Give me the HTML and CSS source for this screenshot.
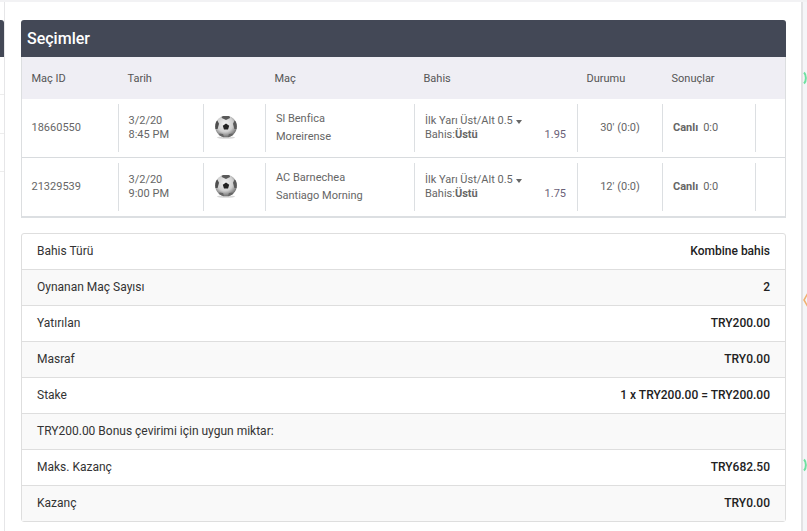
FILE: index.html
```html
<!DOCTYPE html>
<html lang="tr">
<head>
<meta charset="utf-8">
<title>Seçimler</title>
<link rel="stylesheet" href="styles.css">
</head>
<body>
<svg class="defs" width="0" height="0" aria-hidden="true">
  <defs>
    <radialGradient id="ballShade" cx="45%" cy="38%" r="62%">
      <stop offset="0" stop-color="#f4f4f4"/>
      <stop offset="0.6" stop-color="#cfcfcf"/>
      <stop offset="1" stop-color="#6e6e6e"/>
    </radialGradient>
    <clipPath id="ballClip"><circle cx="11" cy="10.5" r="10.8"/></clipPath>
    <symbol id="ball" viewBox="0 0 22 24">
      <ellipse cx="11" cy="21.6" rx="9" ry="1.1" fill="#d8d8d8"/>
      <circle cx="11" cy="10.5" r="10.8" fill="url(#ballShade)"/>
      <g clip-path="url(#ballClip)">
        <path d="M11 7.5l3.2 2.3-1.2 3.7H9l-1.2-3.7z" fill="#222"/>
        <path d="M6.5-.5h8l.5 2.4-4 2-4.2-2z" fill="#5a5a5a"/>
        <path d="M-1 6l3.4-1.6 1.6 3.4-1.4 5.2H-1z" fill="#4e4e4e"/>
        <path d="M23 6l-3.4-1.6-1.6 3.4 1.4 5.2H23z" fill="#5a5a5a"/>
        <path d="M4.5 17.5l3.6.6 1 3.9H3z" fill="#666"/>
        <path d="M17.5 17.5l-3.6.6-1 3.9H19z" fill="#666"/>
      </g>
    </symbol>
  </defs>
</svg>
<div class="top-strip"></div>
<div class="layout">
  <div class="main">
    <aside class="stub">
      <div class="stub-head"></div>
      <div class="stub-row"></div>
      <div class="stub-row"></div>
      <div class="stub-row"></div>
    </aside>
    <div class="content">
      <section class="selections">
        <h2 class="sel-title">Seçimler</h2>
        <div class="sel-table">
          <div class="grid sel-head">
            <div>Maç ID</div>
            <div>Tarih</div>
            <div></div>
            <div>Maç</div>
            <div>Bahis</div>
            <div>Durumu</div>
            <div>Sonuçlar</div>
            <div></div>
          </div>
          <div class="grid sel-row">
            <div class="cell cell-id">18660550</div>
            <div class="cell sep tight">3/2/20<br>8:45 PM</div>
            <div class="cell sep cell-icon"><svg class="ball" width="22" height="24"><use href="#ball"/></svg></div>
            <div class="cell sep teams"><div>Sl Benfica</div><div>Moreirense</div></div>
            <div class="cell sep bet">
              <div class="bet-market">İlk Yarı Üst/Alt 0.5<span class="caret"></span></div>
              <div class="bet-line"><span>Bahis:<b>Üstü</b></span><span class="odds">1.95</span></div>
            </div>
            <div class="cell sep status">30' (0:0)</div>
            <div class="cell sep result"><b>Canlı</b><span class="score">0:0</span></div>
            <div class="cell sep"></div>
          </div>
          <div class="grid sel-row">
            <div class="cell cell-id">21329539</div>
            <div class="cell sep tight">3/2/20<br>9:00 PM</div>
            <div class="cell sep cell-icon"><svg class="ball" width="22" height="24"><use href="#ball"/></svg></div>
            <div class="cell sep teams"><div>AC Barnechea</div><div>Santiago Morning</div></div>
            <div class="cell sep bet">
              <div class="bet-market">İlk Yarı Üst/Alt 0.5<span class="caret"></span></div>
              <div class="bet-line"><span>Bahis:<b>Üstü</b></span><span class="odds">1.75</span></div>
            </div>
            <div class="cell sep status">12' (0:0)</div>
            <div class="cell sep result"><b>Canlı</b><span class="score">0:0</span></div>
            <div class="cell sep"></div>
          </div>
        </div>
      </section>
      <section class="summary">
        <div class="sum-row"><span>Bahis Türü</span><b>Kombine bahis</b></div>
        <div class="sum-row"><span>Oynanan Maç Sayısı</span><b>2</b></div>
        <div class="sum-row"><span>Yatırılan</span><b>TRY200.00</b></div>
        <div class="sum-row"><span>Masraf</span><b>TRY0.00</b></div>
        <div class="sum-row"><span>Stake</span><b>1 x TRY200.00 = TRY200.00</b></div>
        <div class="sum-row"><span>TRY200.00 Bonus çevirimi için uygun miktar:</span></div>
        <div class="sum-row"><span>Maks. Kazanç</span><b>TRY682.50</b></div>
        <div class="sum-row"><span>Kazanç</span><b>TRY0.00</b></div>
      </section>
    </div>
  </div>
  <aside class="rail">
    <svg class="mark mark-a" width="5" height="14" viewBox="0 0 5 14"><path d="M1 1.5C3.5 4 3.5 10 1 12.5" fill="none" stroke="#6fe0a0" stroke-width="2"/></svg>
    <svg class="mark mark-b" width="5" height="18" viewBox="0 0 5 18"><path d="M5 1L1 8l4 7" fill="none" stroke="#f0b070" stroke-width="1.6"/></svg>
    <svg class="mark mark-c" width="5" height="14" viewBox="0 0 5 14"><path d="M1 1.5C3.5 4 3.5 10 1 12.5" fill="none" stroke="#6fe0a0" stroke-width="2"/></svg>
  </aside>
</div>
</body>
</html>
```
FILE: styles.css
```css
* { box-sizing: border-box; }
html, body { margin: 0; height: 100%; }
body {
  width: 807px;
  height: 531px;
  overflow: hidden;
  background: #f5f5f8;
  font-family: Roboto, "Liberation Sans", sans-serif;
  font-size: 11px;
  color: #666;
  display: flex;
  flex-direction: column;
}
.defs { position: absolute; }
.top-strip { height: 2px; flex: none; background: #f2f2f4; }
.layout { flex: 1; display: flex; min-height: 0; }
.main {
  width: 803px;
  flex: none;
  display: flex;
  background: #fff;
  border-right: 2px solid #e2e2e4;
}
.stub { width: 5px; flex: none; padding-top: 18px; border-right: 1px solid #e6e6e8; }
.stub-head { height: 37px; background: #434856; border-top-right-radius: 3px; }
.stub-row { height: 38.3px; border-bottom: 1px solid #ededed; }
.content { margin-left: 16px; width: 765px; padding-top: 18px; }
.selections { border-radius: 3px 3px 0 0; }
.sel-title {
  margin: 0;
  height: 37px;
  padding: 0 6px;
  background: #434856;
  color: #fff;
  font-size: 16px;
  font-weight: 500;
  line-height: 37px;
  border-radius: 3px 3px 0 0;
}
.sel-table {
  border: 1px solid #dcdee0;
  border-top: 0;
  border-bottom: 2px solid #dcdfe2;
}
.grid { display: grid; grid-template-columns: 96px 85px 62px 149px 163px 85px 93px 1fr; }
.sel-head { height: 42px; padding-top: 2px; background: #efeef4; align-items: center; color: #555; line-height: 14px; }
.sel-head > div { padding-left: 9.5px; }
.sel-row { height: 59px; padding: 5px 0; border-bottom: 1px solid #d8dbde; }
.sel-row:last-child { border-bottom: 0; height: 58px; }
.cell { display: flex; flex-direction: column; justify-content: center; padding: 0 10px; line-height: 14px; min-width: 0; }
.cell-id { padding: 0 0 1px 9.5px; }
.sep { border-left: 1px solid #dcdfe2; }
.tight { display: block; padding: 10px 0 0 9.5px; }
.cell-icon { align-items: center; padding: 0 18px 2px 0; }
.ball { display: block; margin-top: 1px; }
.teams { line-height: 18px; }
.bet { padding-right: 11px; }
.bet-market { display: flex; align-items: center; }
.caret {
  width: 0; height: 0; margin-left: 3px; margin-top: 1px;
  border-left: 3.5px solid transparent;
  border-right: 3.5px solid transparent;
  border-top: 4px solid #666;
}
.bet-line { display: flex; justify-content: space-between; }
.bet-line b { font-weight: 700; }
.odds { color: #6a5f78; }
.status { align-items: center; padding-bottom: 1px; }
.result { display: flex; flex-direction: row; justify-content: flex-start; align-items: center; padding-bottom: 1px; }
.result b { font-weight: 700; }
.score { margin-left: 5px; }
.summary {
  margin-top: 15px;
  border: 1px solid #dedede;
  border-radius: 3px;
  font-size: 12px;
  color: #333;
}
.sum-row {
  height: 36px;
  padding: 0 15px 1px;
  display: flex;
  justify-content: space-between;
  align-items: center;
  border-bottom: 1px solid #dedede;
}
.sum-row:nth-child(even) { background: #f9f9f9; }
.sum-row:last-child { border-bottom: 0; height: 35px; }
.sum-row b { font-weight: 500; color: #222; }
.rail { flex: 1; display: flex; flex-direction: column; align-items: flex-start; padding-top: 69px; }
.mark { display: block; flex: none; }
.mark-b { margin-top: 207px; }
.mark-c { margin-top: 148px; }
```
